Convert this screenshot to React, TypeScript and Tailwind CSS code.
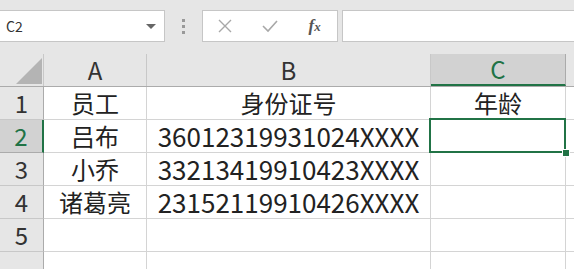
import React from 'react';

const cols = [
  { key: 'A', w: 103 },
  { key: 'B', w: 284 },
  { key: 'C', w: 135 },
  { key: 'D', w: 40 },
];

const rows: string[][] = [
  ['员工', '身份证号', '年龄'],
  ['吕布', '36012319931024XXXX', ''],
  ['小乔', '33213419910423XXXX', ''],
  ['诸葛亮', '23152119910426XXXX', ''],
  ['', '', ''],
  ['', '', ''],
];

const font = { fontFamily: '"Noto Sans CJK SC", "Liberation Sans", sans-serif' };

export default function App() {
  return (
    <div className="w-[574px] h-[269px] overflow-hidden bg-white text-[#222]" style={font}>
      {/* formula bar */}
      <div className="h-[54px] bg-[#e6e6e6] flex items-start pt-[10px]">
        <div className="w-[165px] shrink-0 h-[32px] bg-white border border-[#c6c6c6] border-l-0 flex items-center pl-[6px] pr-[8px]">
          <span className="text-[14px] text-[#333] flex-1">C2</span>
          <span className="w-0 h-0 border-l-[5px] border-r-[5px] border-t-[5px] border-l-transparent border-r-transparent border-t-[#666]" />
        </div>
        <div className="w-[37px] shrink-0 h-[32px] flex flex-col items-center justify-center gap-[3px]">
          <span className="w-[3px] h-[3px] bg-[#999]" />
          <span className="w-[3px] h-[3px] bg-[#999]" />
          <span className="w-[3px] h-[3px] bg-[#999]" />
        </div>
        <div className="w-[136px] shrink-0 h-[32px] bg-white border border-[#c6c6c6] flex items-center">
          <div className="w-[45px] flex justify-center">
            <svg width="14" height="14" viewBox="0 0 14 14">
              <path d="M1 1 L13 13 M13 1 L1 13" stroke="#a8a8a8" strokeWidth="1.4" />
            </svg>
          </div>
          <div className="w-[45px] flex justify-center">
            <svg width="16" height="14" viewBox="0 0 16 14">
              <path d="M1 7 L6 12 L15 2" stroke="#a8a8a8" strokeWidth="1.6" fill="none" />
            </svg>
          </div>
          <div className="w-[45px] flex justify-center">
            <span className="text-[17px] italic font-bold text-[#555]" style={{ fontFamily: '"Liberation Serif", serif' }}>
              f<span className="text-[13px]">x</span>
            </span>
          </div>
        </div>
        <div className="ml-[4px] flex-1 h-[32px] bg-white border border-[#c6c6c6] border-r-0" />
      </div>

      {/* column headers */}
      <div className="flex h-[33px] bg-[#e6e6e6] border-b border-[#ababab]">
        <div className="w-[44px] shrink-0 h-full border-r border-[#c8c8c8] relative">
          <svg className="absolute left-[16px] top-[4px]" width="26" height="26" viewBox="0 0 26 26">
            <path d="M26 0 L26 26 L0 26 Z" fill="#b4b4b4" />
          </svg>
        </div>
        {cols.map(c => (
          <div
            key={c.key}
            className={
              c.key === 'C'
                ? 'shrink-0 h-full flex items-center justify-center text-[24px] leading-none text-[#217346] bg-[#d2d2d2] border-r border-[#ababab] border-b-2 border-b-[#217346]'
                : 'shrink-0 h-full flex items-center justify-center text-[24px] leading-none text-[#333] border-r border-[#c8c8c8]'
            }
            style={{ width: c.w }}
          >
            {c.key === 'D' ? '' : c.key}
          </div>
        ))}
      </div>

      {/* rows */}
      {rows.map((r, i) => (
        <div key={i} className="flex h-[33px]">
          <div
            className={
              i === 1
                ? 'w-[44px] shrink-0 h-full flex items-center justify-center text-[24px] text-[#217346] bg-[#d2d2d2] border-b border-[#ababab] border-r-2 border-r-[#217346]'
                : 'w-[44px] shrink-0 h-full flex items-center justify-center text-[24px] text-[#333] bg-[#e6e6e6] border-b border-[#c8c8c8] border-r border-r-[#ababab]'
            }
          >
            {i < 5 ? i + 1 : <span className="translate-y-[10px]">{i + 1}</span>}
          </div>
          {cols.map((c, j) => (
            <div
              key={c.key}
              className={
                'shrink-0 h-full border-r border-b border-[#d4d4d4] flex items-center justify-center leading-none whitespace-nowrap relative ' +
                (c.key === 'B' && i > 0 ? 'text-[26px]' : 'text-[24px]')
              }
              style={{ width: c.w }}
            >
              {r[j] ?? ''}
              {i === 1 && c.key === 'C' && (
                <>
                  <div className="absolute left-[-2px] top-[-2px] right-[-1px] bottom-[-1px] border-2 border-[#217346]" />
                  <div className="absolute z-10 right-[-5px] bottom-[-5px] w-[8px] h-[8px] bg-[#217346] border border-white" />
                </>
              )}
            </div>
          ))}
        </div>
      ))}
    </div>
  );
}
